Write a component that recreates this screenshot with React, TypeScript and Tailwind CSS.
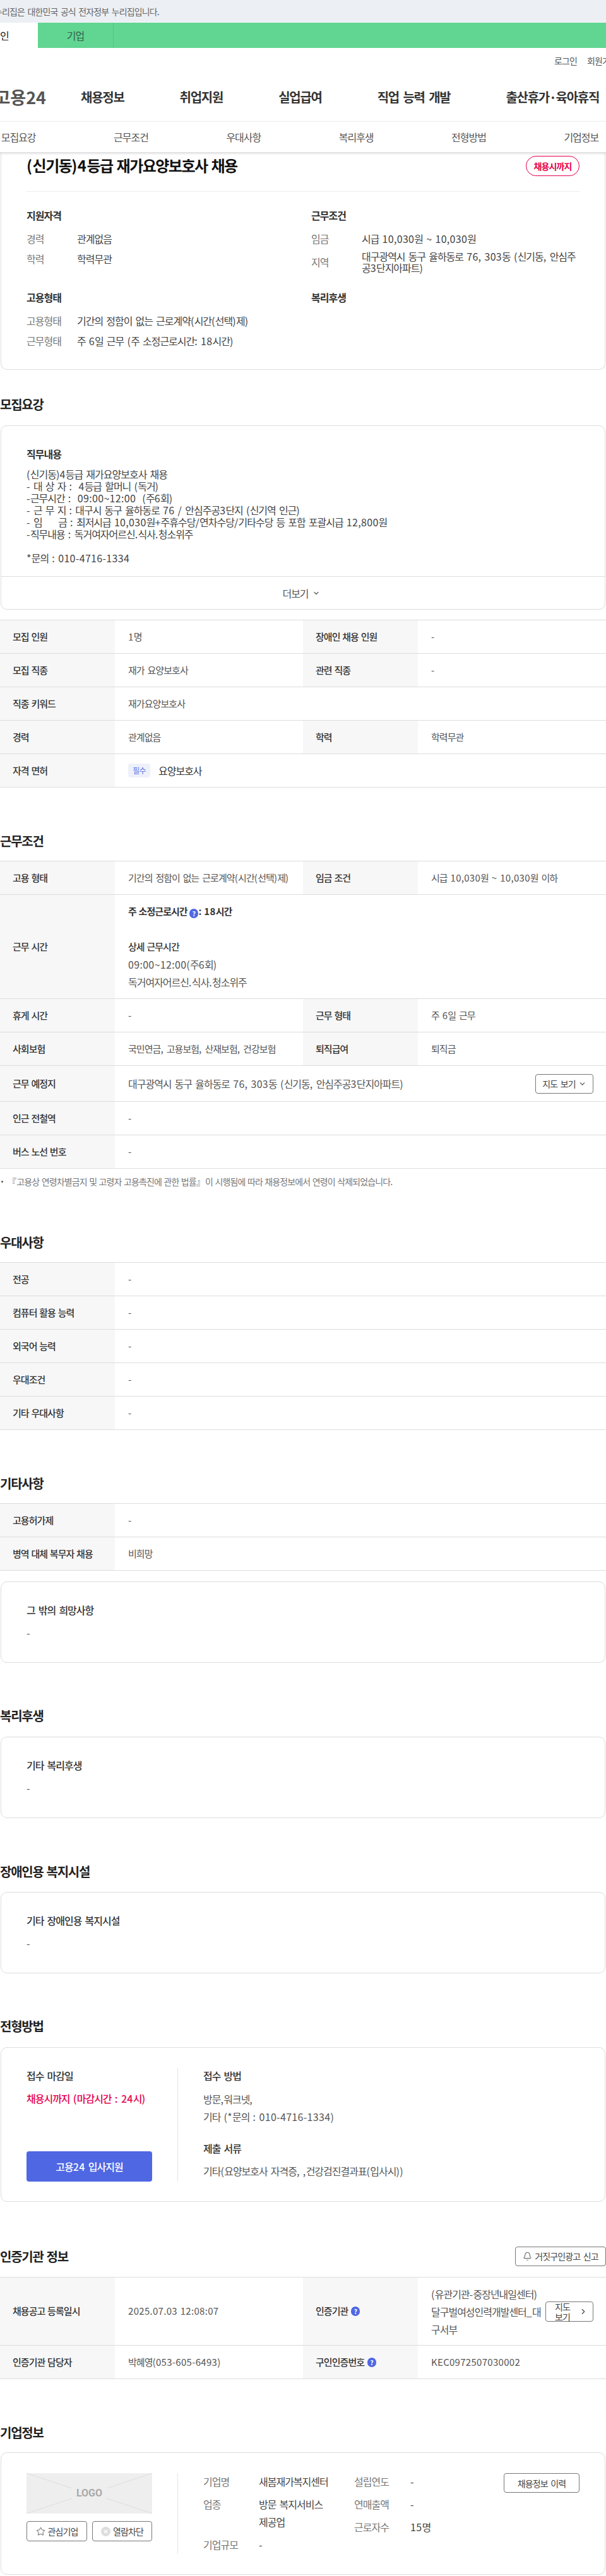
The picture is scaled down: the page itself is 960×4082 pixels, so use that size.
import React from "react";
import { Bell, ChevronDown, ChevronRight, Star } from "lucide-react";

function parts(s: string) {
  return s.split(/([\uac00-\ud7a3·]+)/).map((p, i) =>
    /[\uac00-\ud7a3·]/.test(p) ? (
      <span key={i} className="tracking-[-0.063em]">{p}</span>
    ) : (
      <React.Fragment key={i}>{p}</React.Fragment>
    )
  );
}

function t(s: string): React.ReactNode {
  return <span className="whitespace-pre-wrap tracking-[0.02em] [word-spacing:0.075em]">{parts(s)}</span>;
}

function tight(s: string): React.ReactNode {
  return <span className="whitespace-pre-wrap tracking-[0.02em]">{parts(s)}</span>;
}

function Q() {
  return (
    <span className="inline-flex w-[14px] h-[15px] rounded-full bg-[#4f67e3] text-white text-[10px] leading-[15px] font-bold items-center justify-center align-[-2px]">?</span>
  );
}

function Heading({ children, className = "" }: { children: string; className?: string }) {
  return <h2 className={`h-[30px] text-[20px] leading-[30px] font-semibold text-[#222] whitespace-nowrap ${className}`}>{tight(children)}</h2>;
}

function Th({ children }: { children: React.ReactNode }) {
  return <div className="w-[182px] shrink-0 bg-[#f7f7f7] pl-5 flex items-center text-[15px] font-medium text-[#333] whitespace-nowrap">{children}</div>;
}

function Td({ children, wide }: { children: React.ReactNode; wide?: boolean }) {
  return <div className={`${wide ? "flex-1" : "w-[298px] shrink-0"} pl-[21px] flex items-center text-[15px] text-[#555] whitespace-nowrap`}>{children}</div>;
}

function Row({ h = "h-[53px]", children }: { h?: string; children: React.ReactNode }) {
  return <div className={`${h} flex border-b border-[#ddd]`}>{children}</div>;
}

function R4({ a, b, c, d }: { a: string; b: string; c: string; d: string }) {
  return (
    <Row>
      <Th>{tight(a)}</Th>
      <Td>{t(b)}</Td>
      <Th>{tight(c)}</Th>
      <Td wide>{t(d)}</Td>
    </Row>
  );
}

function R2({ a, b }: { a: string; b: React.ReactNode }) {
  return (
    <Row>
      <Th>{tight(a)}</Th>
      <Td wide>{typeof b === "string" ? t(b) : b}</Td>
    </Row>
  );
}

function Table({ className = "", children }: { className?: string; children: React.ReactNode }) {
  return <div className={`border-t border-[#ddd] ${className}`}>{children}</div>;
}

function Card({ className = "", children }: { className?: string; children: React.ReactNode }) {
  return <div className={`mx-px border border-[#ddd] rounded-[10px] bg-white ${className}`}>{children}</div>;
}

function DashCard({ title, className = "" }: { title: string; className?: string }) {
  return (
    <Card className={`h-[129px] pt-8 pl-10 ${className}`}>
      <div className="text-[16px] leading-6 font-medium text-[#333]">{t(title)}</div>
      <div className="mt-3 text-[16px] leading-6 text-[#555]">-</div>
    </Card>
  );
}

function InfoRow({ label, children, h = "h-6" }: { label: string; children: React.ReactNode; h?: string }) {
  return (
    <div className={`${h} flex items-center text-[16px] whitespace-nowrap`}>
      <div className="w-[80px] text-[#777] leading-6">{t(label)}</div>
      <div className="text-[#444]">{children}</div>
    </div>
  );
}

function InfoHead({ children }: { children: string }) {
  return <div className="text-[16px] leading-6 font-semibold text-[#333]">{t(children)}</div>;
}

function OutlineBtn({ className = "", children }: { className?: string; children: React.ReactNode }) {
  return <div className={`border border-[#777] rounded-[4px] flex items-center justify-center text-[#444] whitespace-nowrap ${className}`}>{children}</div>;
}

const bodyLines = [
  "(신기동)4등급 재가요양보호사 채용",
  "- 대 상 자 :  4등급 할머니 (독거)",
  "-근무시간 :  09:00~12:00  (주6회)",
  "- 근 무 지 : 대구시 동구 율하동로 76 / 안심주공3단지 (신기역 인근)",
  "- 임     금 : 최저시급 10,030원+주휴수당/연차수당/기타수당 등 포함 포괄시급 12,800원",
  "-직무내용 : 독거여자어르신.식사.청소위주",
  " ",
  "*문의 : 010-4716-1334",
];

export default function App() {
  return (
    <div className="w-[960px] h-[4082px] overflow-hidden bg-white text-[#555] font-['Noto_Sans_CJK_KR','Noto_Sans',sans-serif]">
      {/* gov banner */}
      <div className="h-9 bg-[#ecf0f5] flex items-center">
        <div className="w-[253px] flex justify-end overflow-hidden whitespace-nowrap text-[14px] text-[#666]">
          <span className="shrink-0">{t("이 누리집은 대한민국 공식 전자정부 누리집입니다.")}</span>
        </div>
      </div>
      {/* user type tabs */}
      <div className="h-10 bg-[#61d592] flex -ml-[60px] text-[16px] leading-10">
        <div className="w-[120px] bg-white text-center text-[#222]">{t("개인")}</div>
        <div className="w-[120px] text-center text-[#33604a] border-r border-[#55c486]">{t("기업")}</div>
      </div>
      {/* util */}
      <div className="h-10 flex items-center pl-[878px] gap-4 whitespace-nowrap text-[14px] text-[#555]">
        <span className="shrink-0">{t("로그인")}</span>
        <span className="shrink-0">{t("회원가입")}</span>
      </div>
      {/* nav */}
      <div className="h-[76px] flex items-center whitespace-nowrap">
        <div className="w-[73px] shrink-0 flex justify-end overflow-hidden text-[27px] font-bold text-[#555]">
          <span className="shrink-0">고용24</span>
        </div>
        <div className="ml-[55px] flex gap-[88px] text-[20px] font-semibold text-[#333]">
          <span>{tight("채용정보")}</span>
          <span>{tight("취업지원")}</span>
          <span>{tight("실업급여")}</span>
          <span>{t("직업 능력 개발")}</span>
          <span>{tight("출산휴가·육아휴직")}</span>
        </div>
      </div>
      {/* section tabs */}
      <div className="relative z-10 h-[49px] w-[960px] border-t border-[#eee] bg-white shadow-[0_2px_4px_rgba(0,0,0,0.16)] flex overflow-hidden">
        <div className="-ml-[60px] w-[1070px] shrink-0 grid grid-cols-6 text-[16px] leading-[48px] text-center text-[#555]">
          <span>{t("모집요강")}</span>
          <span>{t("근무조건")}</span>
          <span>{t("우대사항")}</span>
          <span>{t("복리후생")}</span>
          <span>{t("전형방법")}</span>
          <span>{t("기업정보")}</span>
        </div>
      </div>

      {/* summary card */}
      <div className="mx-px h-[345px] border border-t-0 border-[#ddd] rounded-b-[10px] px-10">
        <div className="pt-1.5 pb-6 flex justify-between items-start border-b border-[#eee]">
          <h1 className="text-[24px] leading-[30px] font-bold text-[#111]">{tight("(신기동)4등급 재가요양보호사 채용")}</h1>
          <div className="w-[85px] h-8 rounded-full border border-[#e6004c] text-[#e6004c] text-[14px] font-semibold flex items-center justify-center">{t("채용시까지")}</div>
        </div>
        <div className="mt-[25px] grid grid-cols-[451px_1fr] grid-rows-[130px_auto]">
          <div>
            <InfoHead>지원자격</InfoHead>
            <div className="mt-[13px] flex flex-col gap-2">
              <InfoRow label="경력">{t("관계없음")}</InfoRow>
              <InfoRow label="학력">{t("학력무관")}</InfoRow>
            </div>
          </div>
          <div>
            <InfoHead>근무조건</InfoHead>
            <div className="mt-[13px] flex flex-col gap-[7px]">
              <InfoRow label="임금">{t("시급 10,030원 ~ 10,030원")}</InfoRow>
              <InfoRow label="지역" h="h-9">
                <div className="leading-[18px]">
                  {t("대구광역시 동구 율하동로 76, 303동 (신기동, 안심주")}
                  <br />
                  {t("공3단지아파트)")}
                </div>
              </InfoRow>
            </div>
          </div>
          <div>
            <InfoHead>고용형태</InfoHead>
            <div className="mt-[13px] flex flex-col gap-2">
              <InfoRow label="고용형태">{t("기간의 정함이 없는 근로계약(시간(선택)제)")}</InfoRow>
              <InfoRow label="근무형태">{t("주 6일 근무 (주 소정근로시간: 18시간)")}</InfoRow>
            </div>
          </div>
          <div>
            <InfoHead>복리후생</InfoHead>
          </div>
        </div>
      </div>

      {/* 모집요강 */}
      <Heading className="mt-10">모집요강</Heading>
      <Card className="mt-[18px]">
        <div className="h-[239px] pt-8 px-10 border-b border-[#ddd]">
          <div className="text-[16px] leading-6 font-semibold text-[#333]">{t("직무내용")}</div>
          <div className="mt-[11px] text-[16px] leading-[19px] text-[#444] whitespace-pre">
            {bodyLines.map((l, i) => (
              <div key={i} className="h-[19px]">{t(l)}</div>
            ))}
          </div>
        </div>
        <div className="h-[51px] pr-1.5 flex items-center justify-center gap-1.5 text-[16px] text-[#555]">
          {t("더보기")}
          <ChevronDown size={12} strokeWidth={2.4} />
        </div>
      </Card>
      <Table className="mt-4">
        <R4 a="모집 인원" b="1명" c="장애인 채용 인원" d="-" />
        <R4 a="모집 직종" b="재가 요양보호사" c="관련 직종" d="-" />
        <R2 a="직종 키워드" b="재가요양보호사" />
        <R4 a="경력" b="관계없음" c="학력" d="학력무관" />
        <R2
          a="자격 면허"
          b={
            <div className="flex items-center">
              <span className="w-[35px] h-[22px] rounded-[4px] bg-[#eef1fb] text-[#5b73e8] text-[12px] flex items-center justify-center">{t("필수")}</span>
              <span className="ml-[13px] text-[16px] text-[#333]">{t("요양보호사")}</span>
            </div>
          }
        />
      </Table>

      {/* 근무조건 */}
      <Heading className="mt-[70px]">근무조건</Heading>
      <Table className="mt-4">
        <R4 a="고용 형태" b="기간의 정함이 없는 근로계약(시간(선택)제)" c="임금 조건" d="시급 10,030원 ~ 10,030원 이하" />
        <Row h="h-[165px]">
          <Th>{tight("근무 시간")}</Th>
          <Td wide>
            <div className="leading-7">
              <div className="font-semibold text-[#333]">
                {tight("주 소정근로시간 ")}
                <Q />
                {tight(": 18시간")}
              </div>
              <div className="h-7" />
              <div className="font-medium text-[#333]">{tight("상세 근무시간")}</div>
              <div className="text-[16px]">{t("09:00~12:00(주6회)")}</div>
              <div className="text-[16px]">{t("독거여자어르신.식사.청소위주")}</div>
            </div>
          </Td>
        </Row>
        <R4 a="휴게 시간" b="-" c="근무 형태" d="주 6일 근무" />
        <R4 a="사회보험" b="국민연금, 고용보험, 산재보험, 건강보험" c="퇴직급여" d="퇴직금" />
        <Row h="h-[57px]">
          <Th>{tight("근무 예정지")}</Th>
          <Td wide>
            <div className="w-[737px] flex items-center justify-between">
              <span className="text-[16px]">{t("대구광역시 동구 율하동로 76, 303동 (신기동, 안심주공3단지아파트)")}</span>
              <OutlineBtn className="w-[92px] h-[31px] gap-1 text-[14px]">
                {t("지도 보기")}
                <ChevronDown size={13} />
              </OutlineBtn>
            </div>
          </Td>
        </Row>
        <R2 a="인근 전철역" b="-" />
        <R2 a="버스 노선 번호" b="-" />
      </Table>
      <div className="mt-2.5 h-5 flex items-center text-[14px] leading-5 text-[#777] whitespace-nowrap">
        <span className="ml-0.5 w-[3px] h-[3px] rounded-full bg-[#555] mr-[7px]" />
        {tight("『고용상 연령차별금지 및 고령자 고용촉진에 관한 법률』이 시행됨에 따라 채용정보에서 연령이 삭제되었습니다.")}
      </div>

      {/* 우대사항 */}
      <Heading className="mt-[72px]">우대사항</Heading>
      <Table className="mt-4">
        <R2 a="전공" b="-" />
        <R2 a="컴퓨터 활용 능력" b="-" />
        <R2 a="외국어 능력" b="-" />
        <R2 a="우대조건" b="-" />
        <R2 a="기타 우대사항" b="-" />
      </Table>

      {/* 기타사항 */}
      <Heading className="mt-[70px]">기타사항</Heading>
      <Table className="mt-4">
        <R2 a="고용허가제" b="-" />
        <R2 a="병역 대체 복무자 채용" b="비희망" />
      </Table>
      <DashCard className="mt-[17px]" title="그 밖의 희망사항" />

      <Heading className="mt-[69px]">복리후생</Heading>
      <DashCard className="mt-[18px]" title="기타 복리후생" />

      <Heading className="mt-[70px]">장애인용 복지시설</Heading>
      <DashCard className="mt-[17px]" title="기타 장애인용 복지시설" />

      {/* 전형방법 */}
      <Heading className="mt-[69px]">전형방법</Heading>
      <Card className="mt-[18px] h-[245px] pt-8 pl-10 flex">
        <div className="w-[199px] h-[180px] flex flex-col justify-between">
          <div>
            <div className="text-[16px] leading-6 font-medium text-[#333]">{t("접수 마감일")}</div>
            <div className="mt-3 text-[16px] leading-6 font-medium text-[#e6004c] whitespace-nowrap">{t("채용시까지 (마감시간 : 24시)")}</div>
          </div>
          <div className="h-12 rounded-[4px] bg-[#4f67e3] text-white text-[16px] font-medium flex items-center justify-center">{t("고용24 입사지원")}</div>
        </div>
        <div className="ml-10 h-[180px] pl-10 border-l border-[#e5e5e5]">
          <div className="text-[16px] leading-6 font-medium text-[#333]">{t("접수 방법")}</div>
          <div className="mt-[11px] text-[16px] leading-7 text-[#555]">
            {t("방문,워크넷,")}
            <br />
            {t("기타 (*문의 : 010-4716-1334)")}
          </div>
          <div className="mt-[24px] text-[16px] leading-6 font-medium text-[#333]">{t("제출 서류")}</div>
          <div className="mt-[10px] text-[16px] leading-7 text-[#555]">{t("기타(요양보호사 자격증, ,건강검진결과표(입사시))")}</div>
        </div>
      </Card>

      {/* 인증기관 정보 */}
      <div className="mt-[71px] h-[31px] flex items-center justify-between">
        <Heading>인증기관 정보</Heading>
        <OutlineBtn className="w-[144px] h-[31px] gap-1 text-[14px]">
          <Bell size={15} strokeWidth={1.5} />
          {t("거짓구인광고 신고")}
        </OutlineBtn>
      </div>
      <Table className="mt-[17px]">
        <Row h="h-[108px]">
          <Th>{tight("채용공고 등록일시")}</Th>
          <Td>{t("2025.07.03 12:08:07")}</Td>
          <Th>
            {tight("인증기관")}
            <span className="ml-[5px] flex"><Q /></span>
          </Th>
          <Td wide>
            <div className="w-[257px] flex items-center justify-between">
              <div className="text-[16px] leading-7">
                {t("(유관기관-중장년내일센터)")}
                <br />
                {t("달구벌여성인력개발센터_대")}
                <br />
                {t("구서부")}
              </div>
              <OutlineBtn className="w-[76px] h-8 gap-2 text-[14px] leading-4">
                <span className="w-[36px] text-center">
                  {t("지도")}
                  <br />
                  {t("보기")}
                </span>
                <ChevronRight size={14} />
              </OutlineBtn>
            </div>
          </Td>
        </Row>
        <Row>
          <Th>{tight("인증기관 담당자")}</Th>
          <Td>{t("박혜영(053-605-6493)")}</Td>
          <Th>
            {tight("구인인증번호")}
            <span className="ml-[5px] flex"><Q /></span>
          </Th>
          <Td wide>{t("KEC0972507030002")}</Td>
        </Row>
      </Table>

      {/* 기업정보 */}
      <Heading className="mt-[70px]">기업정보</Heading>
      <Card className="mt-4 h-[194px] pt-8 pl-10 pr-10 flex">
        <div className="w-[199px]">
          <div className="relative h-16 bg-[#eee] flex items-center justify-center text-[16px] font-bold text-[#aaa] font-['Roboto',sans-serif]">
            <svg className="absolute inset-0" width="199" height="64" viewBox="0 0 199 64" fill="none" stroke="#ddd">
              <path d="M0 0L72 24M199 0L127 24M0 64L72 40M199 64L127 40" />
            </svg>
            <span className="relative">LOGO</span>
          </div>
          <div className="mt-3 flex justify-between">
            <OutlineBtn className="w-[96px] h-8 gap-1 text-[14px]">
              <Star size={15} strokeWidth={1.4} />
              {t("관심기업")}
            </OutlineBtn>
            <OutlineBtn className="w-[95px] h-8 gap-1 text-[14px]">
              <svg width="15" height="15" viewBox="0 0 15 15">
                <circle cx="7.5" cy="7.5" r="7.5" fill="#ddd" />
                <path d="M5 5L10 10M10 5L5 10" stroke="#fff" strokeWidth="1.4" />
              </svg>
              {t("열람차단")}
            </OutlineBtn>
          </div>
        </div>
        <div className="ml-10 h-[128px] pl-10 border-l border-[#e5e5e5] flex-1 flex items-start justify-between text-[16px] leading-7 whitespace-nowrap">
          <div className="flex -mt-px">
            <div className="w-[239px] flex flex-col gap-2">
              <div className="flex"><div className="w-[88px] text-[#777]">{t("기업명")}</div><div className="text-[#444]">{t("새봄재가복지센터")}</div></div>
              <div className="flex"><div className="w-[88px] text-[#777]">{t("업종")}</div><div className="text-[#444]">{t("방문 복지서비스")}<br />{t("제공업")}</div></div>
              <div className="flex"><div className="w-[88px] text-[#777]">{t("기업규모")}</div><div className="text-[#444]">-</div></div>
            </div>
            <div className="flex flex-col gap-2">
              <div className="flex"><div className="w-[89px] text-[#777]">{t("설립연도")}</div><div className="text-[#444]">-</div></div>
              <div className="flex"><div className="w-[89px] text-[#777]">{t("연매출액")}</div><div className="text-[#444]">-</div></div>
              <div className="flex"><div className="w-[89px] text-[#777]">{t("근로자수")}</div><div className="text-[#444]">{t("15명")}</div></div>
            </div>
          </div>
          <OutlineBtn className="w-[120px] h-[31px] text-[14px]">{t("채용정보 이력")}</OutlineBtn>
        </div>
      </Card>
    </div>
  );
}
